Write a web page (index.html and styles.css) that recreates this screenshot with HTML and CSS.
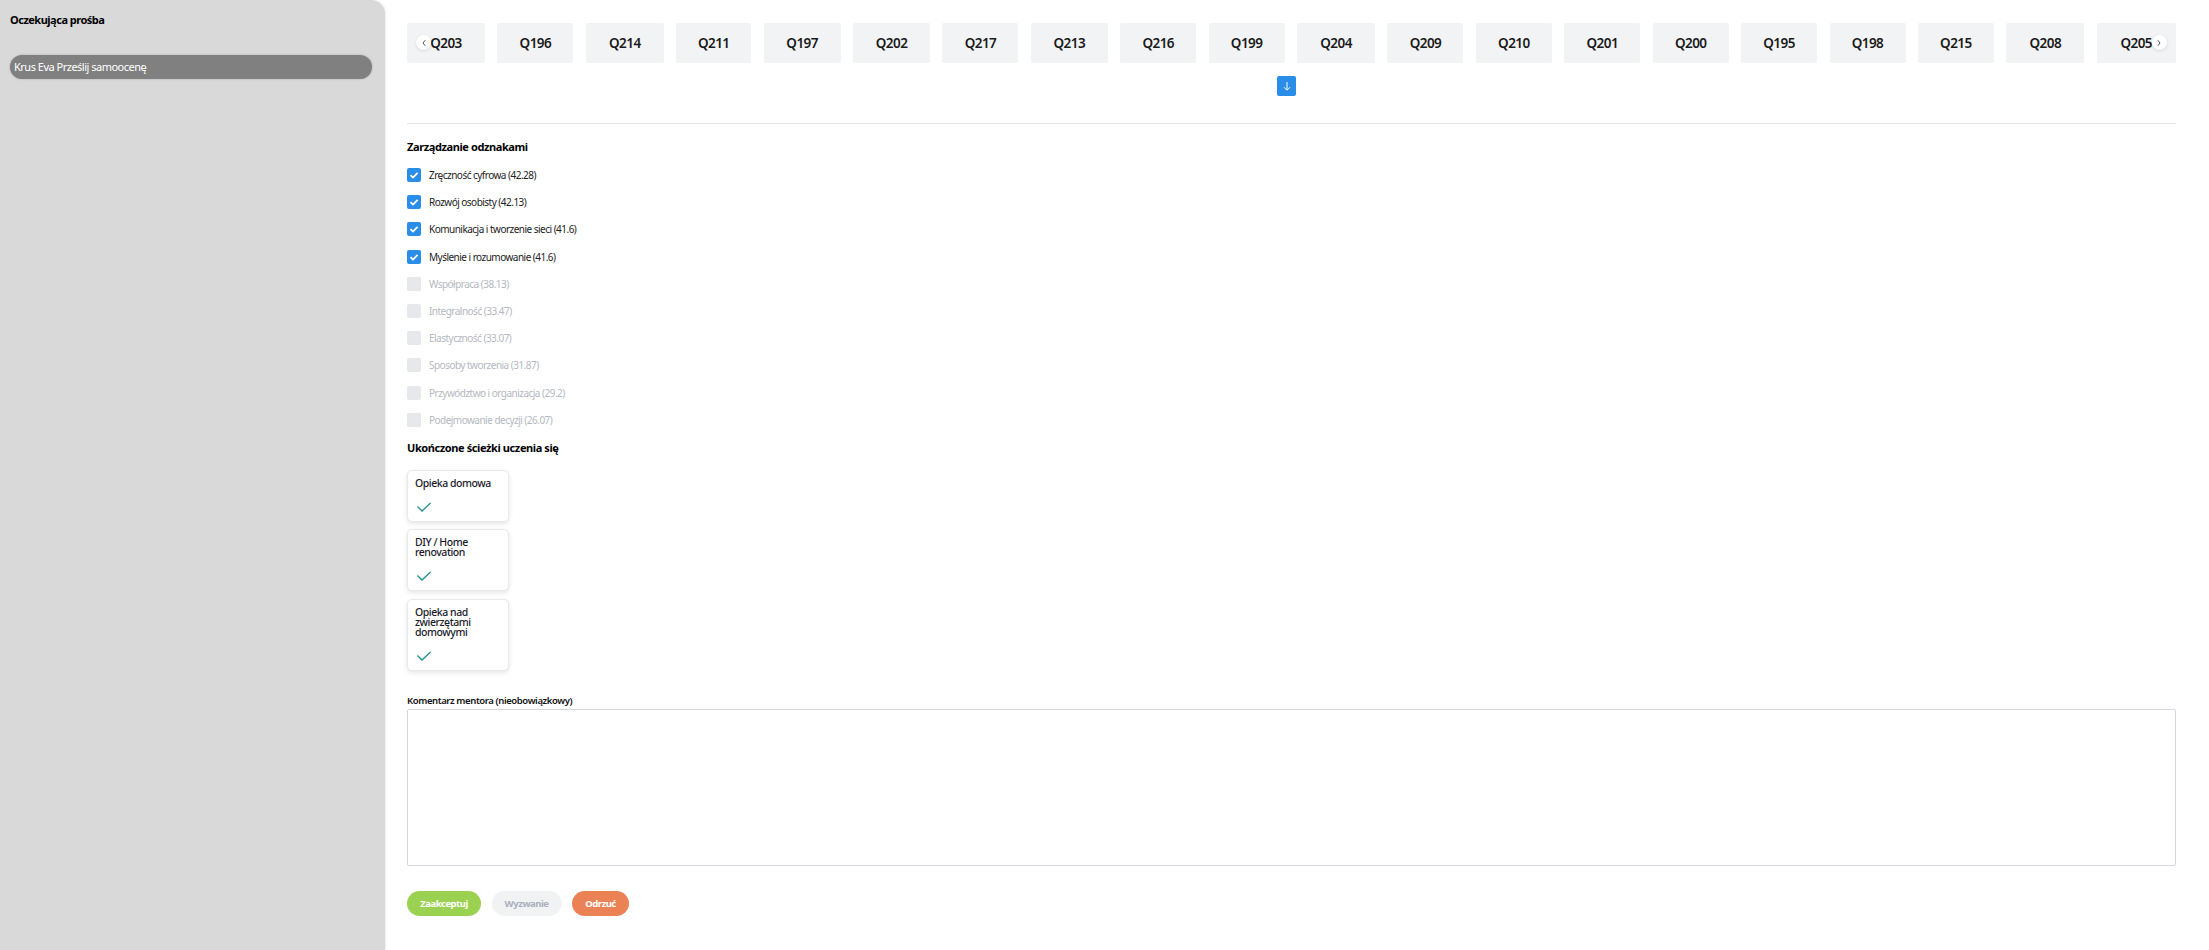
FILE: index.html
```html
<!DOCTYPE html>
<html lang="pl">
<head>
<meta charset="utf-8">
<title>Zarządzanie odznakami</title>
<link rel="stylesheet" href="styles.css">
</head>
<body>
<div class="app">
  <aside class="sidebar">
    <h2 class="side-title">Oczekująca prośba</h2>
    <div class="request">Krus Eva Prześlij samoocenę</div>
  </aside>
  <main class="main">
    <div class="tabs-wrap">
      <div class="tabs">
        <div class="tab w78">Q203</div>
        <div class="tab w76">Q196</div>
        <div class="tab w78">Q214</div>
        <div class="tab w75">Q211</div>
        <div class="tab w77">Q197</div>
        <div class="tab w77">Q202</div>
        <div class="tab w76">Q217</div>
        <div class="tab w77">Q213</div>
        <div class="tab w76">Q216</div>
        <div class="tab w76">Q199</div>
        <div class="tab w78">Q204</div>
        <div class="tab w76">Q209</div>
        <div class="tab w76">Q210</div>
        <div class="tab w76">Q201</div>
        <div class="tab w76">Q200</div>
        <div class="tab w76">Q195</div>
        <div class="tab w76">Q198</div>
        <div class="tab w76">Q215</div>
        <div class="tab w78">Q208</div>
        <div class="tab w79">Q205</div>
      </div>
      <button class="arrow arrow-left"><svg width="8" height="10" viewBox="0 0 8 10"><path d="M5.200 2.200 3 5l2.200 2.800" fill="none" stroke="#555" stroke-width="1"/></svg></button>
      <button class="arrow arrow-right"><svg width="8" height="10" viewBox="0 0 8 10"><path d="M2.800 2.200 5 5 2.800 7.800" fill="none" stroke="#555" stroke-width="1"/></svg></button>
    </div>
    <div class="down-row">
      <button class="down"><svg width="12" height="12" viewBox="0 0 12 12"><path d="M6 2v8M3 7.200 6 10.200 9 7.200" fill="none" stroke="#fff" stroke-width="1"/></svg></button>
    </div>
    <hr class="rule">
    <h3 class="section-title">Zarządzanie odznakami</h3>
    <ul class="badges">
      <li class="badge"><span class="box on"><svg width="14" height="14" viewBox="0 0 14 14"><path d="M3.500 7.200 6 9.600l4.600-4.800" fill="none" stroke="#fff" stroke-width="1.800"/></svg></span>Zręczność cyfrowa (42.28)</li>
      <li class="badge"><span class="box on"><svg width="14" height="14" viewBox="0 0 14 14"><path d="M3.500 7.200 6 9.600l4.600-4.800" fill="none" stroke="#fff" stroke-width="1.800"/></svg></span>Rozwój osobisty (42.13)</li>
      <li class="badge"><span class="box on"><svg width="14" height="14" viewBox="0 0 14 14"><path d="M3.500 7.200 6 9.600l4.600-4.800" fill="none" stroke="#fff" stroke-width="1.800"/></svg></span>Komunikacja i tworzenie sieci (41.6)</li>
      <li class="badge"><span class="box on"><svg width="14" height="14" viewBox="0 0 14 14"><path d="M3.500 7.200 6 9.600l4.600-4.800" fill="none" stroke="#fff" stroke-width="1.800"/></svg></span>Myślenie i rozumowanie (41.6)</li>
      <li class="badge off"><span class="box"></span>Współpraca (38.13)</li>
      <li class="badge off"><span class="box"></span>Integralność (33.47)</li>
      <li class="badge off"><span class="box"></span>Elastyczność (33.07)</li>
      <li class="badge off"><span class="box"></span>Sposoby tworzenia (31.87)</li>
      <li class="badge off"><span class="box"></span>Przywództwo i organizacja (29.2)</li>
      <li class="badge off"><span class="box"></span>Podejmowanie decyzji (26.07)</li>
    </ul>
    <h3 class="section-title second">Ukończone ścieżki uczenia się</h3>
    <div class="paths">
      <div class="path"><div class="path-name">Opieka domowa</div><svg class="tick" width="16" height="12" viewBox="0 0 16 12"><path d="M1.500 5.500 6 10 14.500 2" fill="none" stroke="#1f8f8f" stroke-width="1.300"/></svg></div>
      <div class="path"><div class="path-name">DIY / Home renovation</div><svg class="tick" width="16" height="12" viewBox="0 0 16 12"><path d="M1.500 5.500 6 10 14.500 2" fill="none" stroke="#1f8f8f" stroke-width="1.300"/></svg></div>
      <div class="path"><div class="path-name">Opieka nad zwierzętami domowymi</div><svg class="tick" width="16" height="12" viewBox="0 0 16 12"><path d="M1.500 5.500 6 10 14.500 2" fill="none" stroke="#1f8f8f" stroke-width="1.300"/></svg></div>
    </div>
    <label class="comment-label" for="comment">Komentarz mentora (nieobowiązkowy)</label>
    <textarea class="comment" id="comment"></textarea>
    <div class="actions">
      <button class="btn accept">Zaakceptuj</button>
      <button class="btn challenge">Wyzwanie</button>
      <button class="btn reject">Odrzuć</button>
    </div>
  </main>
</div>
</body>
</html>
```
FILE: styles.css
```css
* { box-sizing: border-box; }
html, body { margin: 0; height: 100%; }
body { font-family: "Noto Sans", "Open Sans", sans-serif; color: #111; background: #fff; overflow: hidden; }
.app { display: flex; height: 950px; }
.sidebar { width: 385px; flex: none; background: #d9d9d9; border-top-right-radius: 14px; padding: 13px 10px 0 10px; box-shadow: 1px 0 2px rgba(0,0,0,.08); }
.side-title { margin: 0; font-size: 11px; line-height: 14px; font-weight: 700; color: #000; letter-spacing: -.5px; }
.request { margin-top: 28px; height: 24px; width: 362px; background: #808080; color: #fff; border-radius: 12px; font-size: 11px; line-height: 24px; padding-left: 4px; letter-spacing: -.5px; box-shadow: 0 0 2px rgba(0,0,0,.25); }
.main { flex: 1; min-width: 0; padding: 23px 33px 0 22px; }
.tabs-wrap { position: relative; }
.tabs { display: flex; justify-content: space-between; overflow: hidden; }
.tab { flex: none; height: 40px; background: #f2f3f5; border-radius: 2px; font-size: 13.500px; font-weight: 600; letter-spacing: -.55px; line-height: 40px; text-align: center; color: #1a1a1a; }
.w75 { width: 75px; }
.w76 { width: 76px; }
.w77 { width: 77px; }
.w78 { width: 78px; }
.w79 { width: 79px; }
.arrow { position: absolute; top: 12px; width: 15px; height: 15px; padding: 0; border: 0; border-radius: 50%; background: #fff; display: flex; align-items: center; justify-content: center; box-shadow: 0 1px 3px rgba(0,0,0,.12); }
.arrow-left { left: 9px; }
.arrow-right { right: 9.500px; }
.down-row { display: flex; justify-content: center; margin-top: 13px; padding-right: 10px; }
.down { width: 19px; height: 20px; padding: 0; border: 0; border-radius: 2px; background: #2a8de8; display: flex; align-items: center; justify-content: center; }
.rule { margin: 27px 0 0; border: 0; border-top: 1px solid #e3e4e7; }
.section-title { margin: 14.500px 0 0; font-size: 11px; line-height: 15px; font-weight: 700; color: #000; letter-spacing: -.4px; }
.section-title.second { margin-top: 7px; }
.badges { list-style: none; margin: 8px 0 0; padding: 0; }
.badge { display: flex; align-items: center; height: 27.200px; font-size: 10px; letter-spacing: -.52px; color: #222; }
.badge.off { color: #b4b8bf; }
.box { width: 14px; height: 14px; border-radius: 2px; background: #e6e8eb; margin-right: 8px; flex: none; display: flex; }
.box.on { background: #2a8de8; }
.paths { display: flex; flex-direction: column; gap: 7.500px; margin-top: 14.500px; width: 102px; }
.path { width: 102px; background: #fff; border: 1px solid #e9e9ec; border-radius: 5px; box-shadow: 0 2px 5px rgba(0,0,0,.1); padding: 7px 7px 8px; }
.path-name { font-size: 10.500px; font-weight: 500; line-height: 10px; letter-spacing: -.45px; color: #1a1a2a; }
.tick { display: block; margin: 13px 0 0 1px; }
.comment-label { display: block; margin-top: 23px; font-size: 9.500px; line-height: 13px; font-weight: 600; letter-spacing: -.4px; color: #111; }
.comment { display: block; width: 100%; height: 157px; margin-top: 2px; border: 1px solid #d3d7df; border-radius: 2px; resize: none; background: #fff; }
.actions { display: flex; gap: 10.500px; margin-top: 25px; }
.btn { height: 25px; border: 0; border-radius: 13px; padding: 0; font-family: inherit; font-size: 9.500px; font-weight: 700; letter-spacing: -.5px; color: #fff; }
.accept { width: 74px; background: #9bd151; }
.challenge { width: 70px; background: #f1f2f4; color: #aab0bb; }
.reject { width: 57px; background: #ea8255; }
```
